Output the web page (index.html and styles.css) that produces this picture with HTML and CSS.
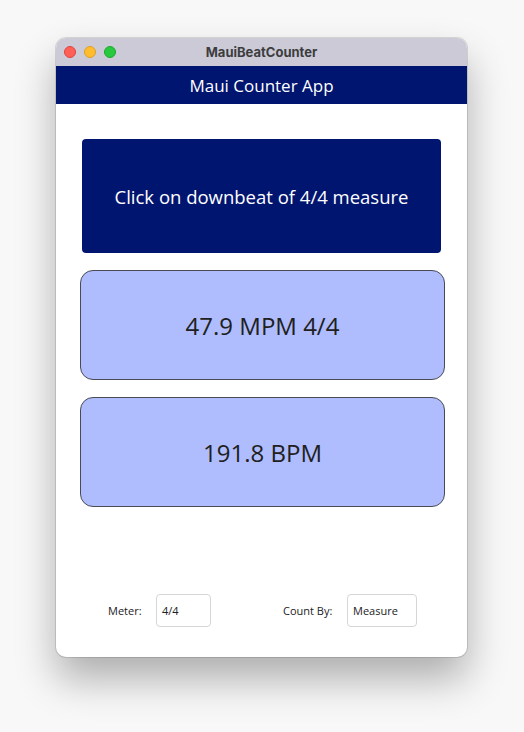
FILE: index.html
```html
<!DOCTYPE html>
<html>
<head>
<meta charset="utf-8">
<link rel="stylesheet" href="styles.css">
</head>
<body>
<div class="window">
  <div class="titlebar">
    <div class="lights">
      <span class="light red"></span>
      <span class="light yellow"></span>
      <span class="light green"></span>
    </div>
    <div class="title">MauiBeatCounter</div>
  </div>
  <div class="header">Maui Counter App</div>
  <div class="content">
    <div class="tap">Click on downbeat of 4/4 measure</div>
    <div class="box">47.9 MPM 4/4</div>
    <div class="box">191.8 BPM</div>
    <div class="spacer"></div>
    <div class="controls">
      <span class="label">Meter:</span>
      <div class="field meter">4/4</div>
      <span class="label countby">Count By:</span>
      <div class="field measure">Measure</div>
    </div>
  </div>
</div>
</body>
</html>
```
FILE: styles.css
```css
html, body {
  margin: 0;
  padding: 0;
}
body {
  background: #f8f8f8;
  width: 524px;
  height: 732px;
  overflow: hidden;
  padding-top: 38px;
  padding-left: 56px;
  box-sizing: border-box;
  font-family: "Open Sans", "Noto Sans", sans-serif;
}
.window {
  width: 411px;
  height: 619px;
  background: #ffffff;
  border-radius: 10px;
  overflow: hidden;
  display: flex;
  flex-direction: column;
  box-shadow: 0 0 0 1px rgba(0,0,0,0.12), 0 22px 40px rgba(0,0,0,0.30);
}
.titlebar {
  height: 28px;
  background: #cbcad6;
  position: relative;
  display: flex;
  align-items: center;
  justify-content: center;
  flex-shrink: 0;
}
.lights {
  position: absolute;
  left: 8px;
  top: 8px;
  display: flex;
  gap: 8px;
}
.light {
  width: 12px;
  height: 12px;
  border-radius: 50%;
  box-sizing: border-box;
}
.red { background: #fe5f57; border: 0.5px solid #e0443e; }
.yellow { background: #febc2e; border: 0.5px solid #dea123; }
.green { background: #28c840; border: 0.5px solid #1aab29; }
.title {
  font-family: "Inter", "Liberation Sans", sans-serif;
  font-weight: 700;
  font-size: 13px;
  color: #3d3d3f;
}
.header {
  height: 38px;
  background: #001570;
  color: #ffffff;
  font-size: 17px;
  display: flex;
  align-items: center;
  justify-content: center;
  flex-shrink: 0;
}
.content {
  flex: 1;
  display: flex;
  flex-direction: column;
  align-items: center;
  padding-top: 35px;
  padding-bottom: 30px;
}
.tap {
  width: 359px;
  height: 114px;
  background: #001570;
  color: #ffffff;
  border-radius: 4px;
  font-size: 18.5px;
  display: flex;
  align-items: center;
  justify-content: center;
}
.box {
  width: 365px;
  height: 110px;
  box-sizing: border-box;
  margin-top: 17px;
  margin-left: 2px;
  background: #afbdfe;
  border: 1px solid #4a4a55;
  border-radius: 13px;
  color: #202020;
  font-size: 24px;
  display: flex;
  align-items: center;
  justify-content: center;
}
.spacer { flex: 1; }
.controls {
  align-self: stretch;
  display: flex;
  align-items: center;
  padding-left: 52px;
  height: 33px;
}
.label {
  font-size: 11px;
  color: #222;
  width: 48px;
}
.countby {
  margin-left: 72px;
  width: 64px;
}
.field {
  height: 33px;
  box-sizing: border-box;
  border: 1px solid #d6d6d6;
  border-radius: 4px;
  font-size: 11px;
  color: #222;
  display: flex;
  align-items: center;
  padding-left: 5px;
}
.meter { width: 55px; }
.measure { width: 70px; }
```
